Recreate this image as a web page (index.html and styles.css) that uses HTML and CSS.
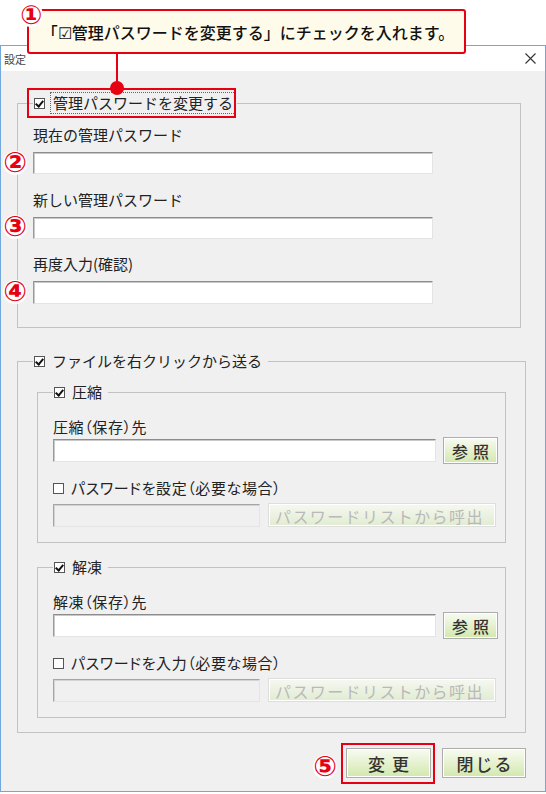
FILE: index.html
```html
<!DOCTYPE html>
<html lang="ja">
    <head>
        <meta charset="UTF-8" />
        <meta name="viewport" content="width=device-width, initial-scale=1.0" />
        <title>設定</title>
        <link rel="stylesheet" href="styles.css">
    </head>
    <body>
        <div class="shot">
            <div class="window">
                <div class="titlebar">
                    <span class="title">設定</span>
                    <svg class="close" width="11" height="11" viewBox="0 0 11 11">
                        <path d="M0.5 0.5 L10.5 10.5 M10.5 0.5 L0.5 10.5" stroke="#333" stroke-width="1.1" fill="none" />
                    </svg>
                </div>

                <div class="client">
                    <fieldset class="group group-admin">
                        <legend>
                            <span class="check is-checked"></span>
                            <span class="focus">管理パスワードを変更する</span>
                        </legend>
                        <div class="field-label">現在の管理パスワード</div>
                        <input class="text wide" type="text">
                        <div class="field-label gap-16">新しい管理パスワード</div>
                        <input class="text wide" type="text">
                        <div class="field-label gap-15">再度入力(確認)</div>
                        <input class="text wide tall" type="text">
                    </fieldset>

                    <fieldset class="group group-send">
                        <legend>
                            <span class="check is-checked"></span>
                            <span>ファイルを右クリックから送る</span>
                        </legend>

                        <fieldset class="group sub">
                            <legend>
                                <span class="check is-checked"></span>
                                <span>圧縮</span>
                            </legend>
                            <div class="field-label paren">圧縮（保存）先</div>
                            <div class="path-row">
                                <input class="text path" type="text">
                                <button class="btn ref">参照</button>
                            </div>
                            <div class="check-row">
                                <span class="check"></span>
                                <span class="paren">パスワードを設定（必要な場合）</span>
                            </div>
                            <div class="pw-row">
                                <input class="text pw" type="text" disabled>
                                <button class="btn list" disabled>パスワードリストから呼出</button>
                            </div>
                        </fieldset>

                        <fieldset class="group sub sub-second">
                            <legend>
                                <span class="check is-checked"></span>
                                <span>解凍</span>
                            </legend>
                            <div class="field-label paren">解凍（保存）先</div>
                            <div class="path-row">
                                <input class="text path" type="text">
                                <button class="btn ref">参照</button>
                            </div>
                            <div class="check-row">
                                <span class="check"></span>
                                <span class="paren">パスワードを入力（必要な場合）</span>
                            </div>
                            <div class="pw-row">
                                <input class="text pw" type="text" disabled>
                                <button class="btn list" disabled>パスワードリストから呼出</button>
                            </div>
                        </fieldset>
                    </fieldset>

                    <div class="actions">
                        <button class="btn big submit">変更</button>
                        <button class="btn big">閉じる</button>
                    </div>
                </div>
            </div>

            <!-- 説明用の注釈 -->
            <span class="line"></span>
            <span class="dot"></span>
            <div class="callout">「☑管理パスワードを変更する」にチェックを入れます。</div>
            <span class="num n1">①</span>
            <span class="mark mark-check"></span>
            <span class="num n2">②</span>
            <span class="num n3">③</span>
            <span class="num n4">④</span>
            <span class="mark mark-submit"></span>
            <span class="num n5">⑤</span>
        </div>
    </body>
</html>
```

FILE: styles.css
```css
:root {
    --red: #e60012;
    --frame: #72a7db;
    --face: #f0f0f0;
    --line: #c2c2c2;
    --text: #222222;
}

* {
    margin: 0;
    padding: 0;
    box-sizing: border-box;
}

body {
    font-family: "Noto Sans CJK JP", "Noto Sans", sans-serif;
    background-color: #ffffff;
    color: var(--text);
}

.shot {
    position: relative;
    width: 546px;
    height: 794px;
    overflow: hidden;
}

/* ウィンドウ */

.window {
    margin-top: 45px;
    width: 546px;
    height: 747px;
    border: 1px solid var(--frame);
    background-color: var(--face);
    display: flex;
    flex-direction: column;
}

.titlebar {
    height: 25px;
    background-color: #ffffff;
    display: flex;
    align-items: center;
    justify-content: space-between;
    padding: 0 9px 0 3px;
}

.title {
    font-size: 11px;
    color: #444;
}

.client {
    flex: 1;
    padding: 0 19px 0 16px;
}

/* グループボックス */

.group {
    border: 1px solid var(--line);
    min-width: 0;
}

.group legend {
    display: flex;
    align-items: center;
    height: 22px;
    font-size: 15px;
    line-height: 20px;
    padding: 0 6px 0 1px;
    gap: 7px;
}

.group-admin {
    width: 504px;
    margin-top: 21px;
    padding: 11px 15px 23px;
}

.group-admin legend {
    padding-right: 2px;
    gap: 6px;
}

.focus {
    outline: 1px dotted #666;
    padding: 0 2px;
}

.group-send {
    width: 509px;
    margin-top: 22px;
    padding: 9px 15px 14px;
}

.sub {
    margin: 0 4px;
    padding: 14px 6px 15px 15px;
}

.sub-second {
    margin-top: 13px;
}

.field-label {
    font-size: 15px;
    line-height: 20px;
}

.paren {
    font-feature-settings: "palt";
    letter-spacing: 0.6px;
}

.gap-16 {
    margin-top: 16px;
}

.gap-15 {
    margin-top: 15px;
}

/* チェックボックス */

.check {
    display: inline-block;
    width: 11px;
    height: 11px;
    border: 1px solid #555;
    background-color: #ffffff;
    flex: none;
    position: relative;
}

.check.is-checked::after {
    content: "";
    position: absolute;
    left: 2px;
    top: 0px;
    width: 3px;
    height: 6px;
    border: solid #111;
    border-width: 0 2px 2px 0;
    transform: rotate(40deg);
}

.check-row {
    display: flex;
    align-items: center;
    gap: 7px;
    margin-top: 14px;
    font-size: 15px;
    line-height: 20px;
}

/* 入力欄 */

.text {
    display: block;
    height: 22px;
    background-color: #ffffff;
    border: 1px solid;
    border-color: #8c8c8c #e4e4e4 #e4e4e4 #9a9a9a;
    box-shadow: inset 1px 1px 0 #c9c9c9;
    outline: none;
}

.wide {
    width: 400px;
    margin-top: 7px;
}

.tall {
    height: 23px;
}

.path-row {
    display: flex;
    align-items: center;
    gap: 7px;
}

.path {
    width: 383px;
    height: 23px;
}

.pw-row {
    display: flex;
    align-items: center;
    gap: 8px;
    margin-top: 5px;
}

.pw {
    width: 207px;
    height: 23px;
    background-color: var(--face);
    border-color: #a5a5a5 #e4e4e4 #e4e4e4 #a5a5a5;
    box-shadow: inset 1px 1px 0 #d4d4d4;
}

/* ボタン */

.btn {
    font-family: "Noto Sans CJK JP", sans-serif;
    color: #333;
    border: 1px solid #adadad;
    background: linear-gradient(#f8fbf2, #d2e8ad);
    box-shadow: inset 0 0 0 1px #ffffff;
}

.ref {
    width: 55px;
    height: 27px;
    font-size: 16px;
    font-weight: 500;
    letter-spacing: 5px;
    padding-left: 5px;
}

.list {
    width: 228px;
    height: 24px;
    font-size: 16px;
    letter-spacing: 1.4px;
    color: #b9b9b9;
    border-color: #dedede;
    background: linear-gradient(#f6f8f1, #e1ecd2);
    white-space: nowrap;
    text-align: left;
    padding-left: 6px;
}

.actions {
    display: flex;
    justify-content: flex-end;
    gap: 11px;
    margin-top: 15px;
}

.big {
    width: 84px;
    height: 30px;
    font-size: 17px;
    font-weight: 500;
    letter-spacing: 2px;
    padding-left: 2px;
}

.submit {
    width: 85px;
    letter-spacing: 7px;
    padding-left: 7px;
}

/* 注釈 */

.callout {
    position: absolute;
    left: 27px;
    top: 9px;
    width: 439px;
    height: 45px;
    border: 2px solid var(--red);
    border-radius: 3px;
    background-color: #fffbea;
    font-size: 16px;
    font-weight: 500;
    color: #111;
    display: flex;
    align-items: center;
    justify-content: center;
    padding-top: 1px;
    padding-left: 3px;
}

.line {
    position: absolute;
    left: 116px;
    top: 52px;
    width: 2px;
    height: 36px;
    background-color: var(--red);
}

.dot {
    position: absolute;
    left: 110px;
    top: 81px;
    width: 14px;
    height: 14px;
    border-radius: 50%;
    background-color: var(--red);
}

.mark {
    position: absolute;
    border: 2px solid var(--red);
}

.mark-check {
    left: 27px;
    top: 88px;
    width: 209px;
    height: 30px;
}

.mark-submit {
    left: 341px;
    top: 743px;
    width: 94px;
    height: 41px;
}

.num {
    position: absolute;
    width: 24px;
    height: 24px;
    margin: -12px 0 0 -12px;
    border-radius: 50%;
    background-color: #ffffff;
    color: var(--red);
    font-family: "DejaVu Sans", "Noto Sans CJK JP", sans-serif;
    font-size: 28px;
    font-weight: 700;
    line-height: 1;
    display: flex;
    align-items: center;
    justify-content: center;
}

.n1 { left: 31px; top: 15px; font-size: 26px; }
.n2 { left: 15px; top: 163px; }
.n3 { left: 15px; top: 227px; }
.n4 { left: 15px; top: 292px; }
.n5 { left: 325px; top: 767px; }
```
